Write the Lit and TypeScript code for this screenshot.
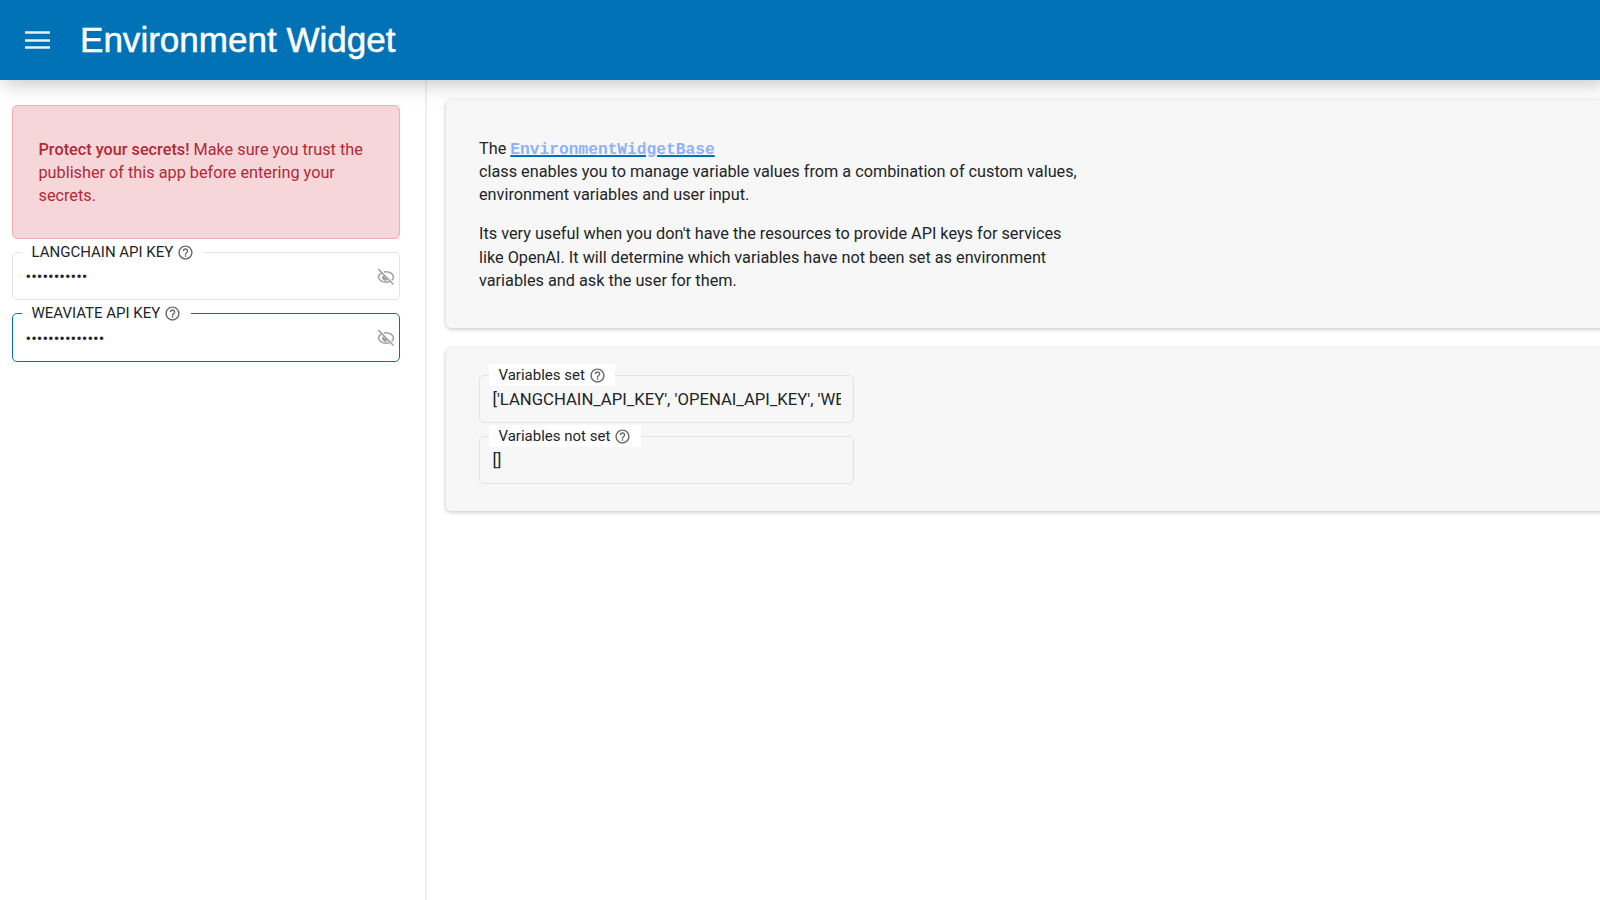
import { LitElement, html, css } from "lit";
import { customElement, property } from "lit/decorators.js";

const helpIcon = html`<svg class="help" viewBox="0 0 24 24" width="17" height="17">
  <path fill="currentColor" d="M11 18h2v-2h-2v2zm1-16C6.48 2 2 6.48 2 12s4.48 10 10 10 10-4.480 10-10S17.520 2 12 2zm0 18c-4.410 0-8-3.590-8-8s3.590-8 8-8 8 3.590 8 8-3.590 8-8 8zm0-14c-2.210 0-4 1.790-4 4h2c0-1.100.9-2 2-2s2 .9 2 2c0 2-3 1.750-3 5h2c0-2.250 3-2.500 3-5 0-2.210-1.790-4-4-4z"/>
</svg>`;

const eyeOff = html`<svg class="eye" viewBox="0 0 24 24" width="18" height="18" fill="none" stroke="#a0a0a0" stroke-width="2">
  <path d="M6.500 6.200C4 7.700 2 9.700 2 12c0 3.400 4.400 7 10 7 1.800 0 3.400-.4 4.800-1M9 5.400c1-.3 2-.4 3-.4 5.800 0 10 3.600 10 7 0 1.600-.9 3.200-2.500 4.500"/>
  <path d="M8.100 9.800a4.200 4.200 0 0 0 6.100 5.900z" fill="#a0a0a0" stroke="none"/>
  <path d="M1.800 1.500 22 22"/>
</svg>`;

@customElement("labeled-field")
export class LabeledField extends LitElement {
  @property() label = "";
  @property() value = "";
  @property({ type: Boolean }) secret = false;
  @property({ type: Boolean }) active = false;

  static styles = css`
    :host { display: block; }
    fieldset {
      box-sizing: border-box;
      height: 59px;
      margin: 0;
      padding: 0 12.500px;
      min-width: 0;
      border: 1px solid #e3e3e3;
      border-radius: 5px;
    }
    fieldset.active { height: 60px; border-color: #0072b5; }
    legend {
      display: flex;
      align-items: center;
      gap: 4px;
      box-sizing: border-box;
      height: 22px;
      margin-left: -3.500px;
      padding: 0 9.500px 0 9.500px;
      background: #fff;
      font-size: 15px;
      white-space: nowrap;
    }
    legend span { padding-top: 1px; }
    .active legend span { padding-top: 2px; }
    .help { display: block; color: #666; }
    .row { display: flex; align-items: center; height: 28px; }
    .active .row { height: 29px; }
    .value { flex: 1; min-width: 0; overflow: hidden; white-space: nowrap; font-size: 16.680px; line-height: 24px; }
    .eye { display: block; margin: -1px -8.500px 0 0; }
  `;

  render() {
    return html`<fieldset class=${this.active ? "active" : ""}>
      <legend><span>${this.label}</span>${helpIcon}</legend>
      <div class="row">
        <span class="value">${this.value}</span>${this.secret ? eyeOff : ""}
      </div>
    </fieldset>`;
  }
}

@customElement("app-root")
export class AppRoot extends LitElement {
  static styles = css`
    :host {
      display: flex;
      flex-direction: column;
      height: 900px;
      overflow: hidden;
      background: #fff;
      color: #212529;
      font-family: Roboto, "Liberation Sans", sans-serif;
      font-size: 16.250px;
      line-height: 23.200px;
    }
    header {
      display: flex;
      align-items: center;
      flex: none;
      box-sizing: border-box;
      height: 80px;
      padding-left: 25px;
      gap: 30px;
      background: #0072b5;
      box-shadow: 5px 4px 18px rgba(158, 158, 158, 0.6);
      color: #fff;
      z-index: 1;
    }
    .title {
      font: 35.050px/44px "Liberation Sans", Arial, sans-serif;
      white-space: nowrap;
      -webkit-text-stroke: 0.5px #fff;
    }
    .menu { display: block; }
    .body { display: flex; flex: 1; min-height: 0; }
    .side {
      box-sizing: border-box;
      flex: none;
      width: 427px;
      padding: 25px 25px 0 12px;
      border-right: 2px solid #efefef;
    }
    .alert {
      box-sizing: border-box;
      height: 134px;
      padding: 32px 25px 0 25.500px;
      border: 1px solid #f1aeb5;
      border-radius: 5px;
      background: #f6d6d9;
      color: #b02a37;
    }
    .line { display: block; white-space: nowrap; }
    strong { font-weight: 500; }
    .secrets { display: flex; flex-direction: column; gap: 2px; padding-top: 2px; }
    .main { flex: 1; min-width: 0; padding: 19.500px 0 0 19px; }
    .card {
      box-sizing: border-box;
      width: 1180px;
      margin-bottom: 19.500px;
      padding-left: 33px;
      border-radius: 5px;
      background: #f7f7f7;
      box-shadow: 0 1px 4px rgba(0, 0, 0, 0.25);
    }
    .intro { height: 228.500px; padding-top: 37.300px; }
    .intro .line { line-height: 23.350px; }
    p { margin: 0 0 15.600px; }
    code { font: 700 16.230px/20px "Liberation Mono", monospace; color: #8fb0fb; }
    a { color: #0072b5; text-decoration: underline; text-decoration-thickness: 1.500px; }
    .vars { display: flex; flex-direction: column; gap: 2px; height: 163.500px; padding-top: 16.500px; }
    .vars labeled-field { width: 375px; }
  `;

  render() {
    return html`
      <header>
        <svg class="menu" width="25" height="20" viewBox="0 0 25 20"><path d="M0 2.500h25M0 10.500h25M0 17.500h25" stroke="#fff" stroke-opacity=".9" stroke-width="2.400"/></svg>
        <span class="title">Environment Widget</span>
      </header>
      <div class="body">
        <div class="side">
          <div class="alert">
            <span class="line"><strong>Protect your secrets!</strong> Make sure you trust the</span>
            <span class="line">publisher of this app before entering your</span>
            <span class="line">secrets.</span>
          </div>
          <div class="secrets">
            <labeled-field label="LANGCHAIN API KEY" value="•••••••••••" secret></labeled-field>
            <labeled-field label="WEAVIATE API KEY" value="••••••••••••••" secret active></labeled-field>
          </div>
        </div>
        <div class="main">
          <div class="card intro">
            <p>
              <span class="line">The <a><code>EnvironmentWidgetBase</code></a></span>
              <span class="line">class enables you to manage variable values from a combination of custom values,</span>
              <span class="line">environment variables and user input.</span>
            </p>
            <p>
              <span class="line">Its very useful when you don't have the resources to provide API keys for services</span>
              <span class="line">like OpenAI. It will determine which variables have not been set as environment</span>
              <span class="line">variables and ask the user for them.</span>
            </p>
          </div>
          <div class="card vars">
            <labeled-field label="Variables set" value="['LANGCHAIN_API_KEY', 'OPENAI_API_KEY', 'WEAVIATE_API_KEY']"></labeled-field>
            <labeled-field label="Variables not set" value="[]"></labeled-field>
          </div>
        </div>
      </div>`;
  }
}
